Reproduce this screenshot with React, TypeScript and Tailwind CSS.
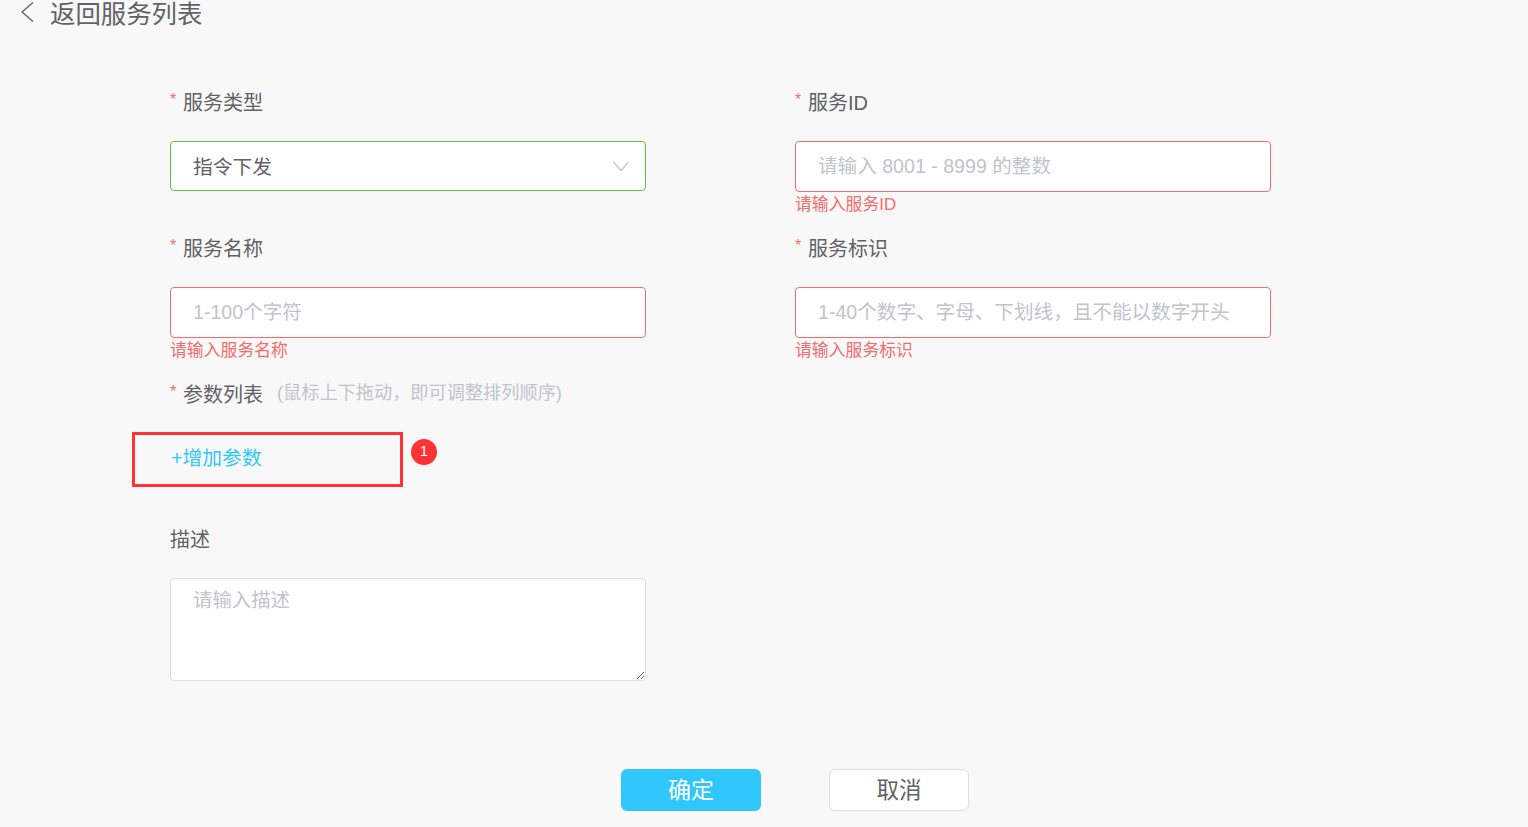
import React from 'react';

const font = "font-['Liberation_Sans','Noto_Sans_CJK_SC',sans-serif]";

function Label({ text, required = true }: { text: string; required?: boolean }) {
  return (
    <div className="flex h-[50px] items-center text-[20px] text-[#606266]">
      {required && <span className="mr-[5px] mt-[-4px] w-[8px] text-[16px] text-[#f56c6c]">*</span>}
      <span className="pt-[2px]">{text}</span>
    </div>
  );
}

function Field({ label, placeholder, error }: { label: string; placeholder: string; error: string }) {
  return (
    <div className="h-[146px]">
      <Label text={label} />
      <input
        placeholder={placeholder}
        className="mt-[14px] block h-[51px] w-full rounded-[4px] border border-[#f56c6c] bg-white pl-[22px] pr-[10px] text-[19.6px] text-[#606266] outline-none placeholder:text-[#c0c4cc]"
      />
      <div className="flex h-[24px] items-center pt-[2px] text-[16.85px] text-[#f56c6c]">{error}</div>
    </div>
  );
}

export default function App() {
  return (
    <div className={`h-screen overflow-hidden bg-[#f8f8f9] ${font}`}>
      {/* Header */}
      <div className="flex h-[77px] items-start">
        <div className="flex h-[28px] items-center pl-[20px] text-[25.4px] text-[#606266]">
          <svg width="14" height="22" viewBox="0 0 14 22" fill="none" className="mt-[-5px]">
            <path d="M13 1.5 L2 11 L13 20.5" stroke="#606266" strokeWidth="1.3" />
          </svg>
          <span className="ml-[16px]">返回服务列表</span>
        </div>
      </div>

      {/* Form */}
      <div className="grid grid-cols-[476px_476px] gap-x-[149px] pl-[170px]">
        <div className="h-[146px]">
          <Label text="服务类型" />
          <div className="mt-[14px] flex h-[50px] items-center justify-between rounded-[4px] border border-[#67c23a] bg-white pl-[22px] pr-[16px] text-[19.8px] text-[#606266]">
            <span className="pt-[4px]">指令下发</span>
            <svg width="16" height="11" viewBox="0 0 16 11" fill="none" className="mt-[1px]">
              <path d="M0.5 1 L8 9.5 L15.5 1" stroke="#c0c4cc" strokeWidth="1.3" />
            </svg>
          </div>
        </div>
        <Field label="服务ID" placeholder="请输入 8001 - 8999 的整数" error="请输入服务ID" />
        <Field label="服务名称" placeholder="1-100个字符" error="请输入服务名称" />
        <Field label="服务标识" placeholder={'1-40个数字、字母、下划线\uFF0C且不能以数字开头'} error="请输入服务标识" />
      </div>

      <div className="w-[646px] pl-[170px]">
        {/* Params */}
        <div className="flex h-[50px] items-center">
          <Label text="参数列表" />
          <span className="ml-[14px] text-[18.2px] text-[#c0c4cc]">{'(鼠标上下拖动\uFF0C即可调整排列顺序)'}</span>
        </div>
        <div className="ml-[-38px] mt-[13px] flex items-start">
          <div className="flex h-[55px] w-[271px] items-center border-[3px] border-[#ff3333] pb-[2px] pl-[36px] text-[19.8px] text-[#30c8fc]">
            +增加参数
          </div>
          <div className="ml-[8px] mt-[7px] flex h-[26px] w-[26px] items-center justify-center rounded-full bg-[#ff3333] pb-[2px] text-[15px] font-medium text-white">
            1
          </div>
        </div>

        {/* Description */}
        <div className="mt-[27px]">
          <Label text="描述" required={false} />
          <textarea
            placeholder="请输入描述"
            className="mt-[14px] block h-[103px] w-[476px] rounded-[4px] border border-[#dcdfe6] bg-white px-[22px] py-[7px] text-[19.4px] leading-[29px] text-[#606266] outline-none placeholder:text-[#c0c4cc]"
          />
        </div>
      </div>

      {/* Actions */}
      <div className="mt-[88px] flex gap-[68px] pl-[621px]">
        <button className="h-[42px] w-[140px] rounded-[6px] bg-[#30c8fc] pt-[1px] text-[23px] text-white">确定</button>
        <button className="h-[42px] w-[140px] rounded-[6px] border border-[#dcdfe6] bg-white pt-[1px] text-[22.5px] text-[#606266]">
          取消
        </button>
      </div>
    </div>
  );
}
